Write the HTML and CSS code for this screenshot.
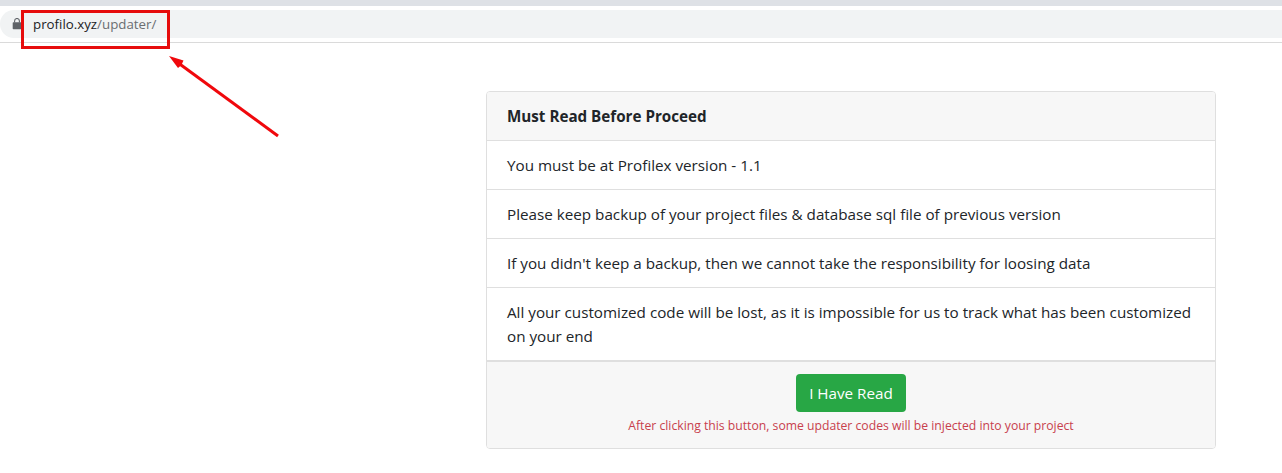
FILE: index.html
```html
<!DOCTYPE html>
<html lang="en">
<head>
<meta charset="utf-8">
<title>Updater</title>
<link rel="stylesheet" href="styles.css">
</head>
<body>
<header class="browser">
  <div class="address-bar">
    <svg class="lock" width="10" height="12" viewBox="0 0 10 12"><rect x="0.7" y="4.2" width="8.6" height="7" rx="0.8" fill="#5f6368"/><path d="M2.6 4.5V2.9a2.4 2.4 0 0 1 4.8 0v1.6" fill="none" stroke="#5f6368" stroke-width="1.1"/></svg>
    <span class="url"><span class="host">profilo.xyz</span><span class="path">/updater/</span></span>
  </div>
</header>
<main class="page">
  <section class="card">
    <h1 class="card-header">Must Read Before Proceed</h1>
    <ul class="list">
      <li class="item">You must be at Profilex version - 1.1</li>
      <li class="item">Please keep backup of your project files &amp; database sql file of previous version</li>
      <li class="item">If you didn't keep a backup, then we cannot take the responsibility for loosing data</li>
      <li class="item">All your customized code will be lost, as it is impossible for us to track what has been customized<br>on your end</li>
    </ul>
    <footer class="card-footer">
      <button class="btn" type="button">I Have Read</button>
      <p class="note">After clicking this button, some updater codes will be injected into your project</p>
    </footer>
  </section>
</main>
<svg class="annotation" width="290" height="145" viewBox="0 0 290 145">
  <rect x="22.5" y="11.5" width="146" height="36" fill="none" stroke="#e60c0c" stroke-width="3"/>
  <path d="M179 63.500L278 136" stroke="#f0080c" stroke-width="3" fill="none"/>
  <path d="M169 56L183.500 60.500L181.500 65L178 68Z" fill="#f0080c"/>
</svg>
</body>
</html>
```
FILE: styles.css
```css
* { box-sizing: border-box; }
body {
  margin: 0;
  background: #fff;
  color: #212529;
  font: 15.22px/24px "Open Sans", "Noto Sans", sans-serif;
}
.browser {
  height: 43px;
  padding-top: 4px;
  border-top: 6px solid #dee1e6;
  border-bottom: 1px solid #dadada;
}
.address-bar {
  display: flex;
  align-items: center;
  height: 28px;
  padding-left: 12px;
  background: #f1f3f4;
  border-radius: 14px 0 0 14px;
}
.lock { flex: none; margin-right: 11px; }
.url { font-size: 13.3px; line-height: 28px; white-space: nowrap; }
.host { color: #202124; }
.path { color: #6a6e72; }
.page { padding: 48px 66px 0 486px; }
.card {
  width: 730px;
  border: 1px solid #dfdfdf;
  border-radius: 4px;
  overflow: hidden;
}
.card-header {
  margin: 0;
  padding: 12px 20px;
  background: #f7f7f7;
  border-bottom: 1px solid #dfdfdf;
  font-size: 15.2px;
  line-height: 24px;
  font-weight: 700;
}
.list { margin: 0; padding: 0; list-style: none; }
.item {
  padding: 12px 20px;
  border-bottom: 1px solid #dfdfdf;
  white-space: nowrap;
}
.card-footer {
  display: flex;
  flex-direction: column;
  align-items: center;
  height: 87px;
  padding-top: 12px;
  background: #f7f7f7;
  border-top: 1px solid #dfdfdf;
}
.btn {
  width: 110px;
  height: 38px;
  padding: 0;
  border: 0;
  border-radius: 4px;
  background: #28a745;
  color: #fff;
  font: inherit;
}
.note {
  margin: 2px 0 0;
  color: #c8404d;
  font-size: 12.2px;
  line-height: 24px;
  white-space: nowrap;
}
.annotation { position: absolute; left: 0; top: 0; }
```
